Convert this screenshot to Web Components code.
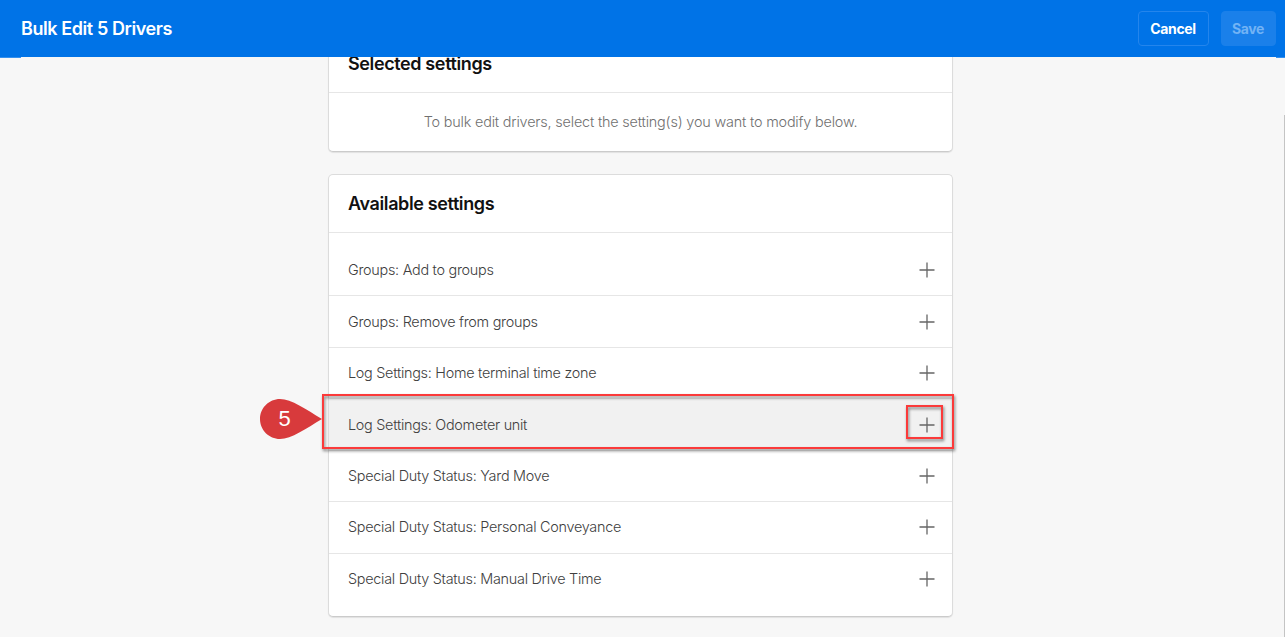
<!DOCTYPE html>
<html lang="en">
<head>
<meta charset="utf-8">
<title>Bulk Edit Drivers</title>
<style>
    html, body {
        margin: 0;
        height: 100%;
        overflow: hidden;
        background: #f7f7f7;
        font-family: Inter, "Liberation Sans", sans-serif;
    }
</style>
</head>
<body>
<bulk-edit-page></bulk-edit-page>

<script>
class ActionButton extends HTMLElement {
    constructor() {
        super();
        this.shadow = this.attachShadow({ mode: "open" });
    }

    connectedCallback() {
        this.shadow.innerHTML = `
            <style>
                :host {
                    display: block;
                }
                button {
                    box-sizing: border-box;
                    width: 100%;
                    height: 35px;
                    padding: 0;
                    border: 1px solid #2485ec;
                    border-radius: 4px;
                    background: transparent;
                    color: #fff;
                    font: 700 14px/20px Inter, "Liberation Sans", sans-serif;
                    letter-spacing: -0.35px;
                }
                :host([disabled]) button {
                    border-color: #1a80ea;
                    background: #1a80ea;
                    color: #72b3f5;
                }
            </style>
            <button><slot></slot></button>
        `;
    }
}

class PageHeader extends HTMLElement {
    constructor() {
        super();
        this.shadow = this.attachShadow({ mode: "open" });
    }

    connectedCallback() {
        this.shadow.innerHTML = `
            <style>
                :host {
                    display: block;
                    flex: none;
                    height: 58px;
                    background: linear-gradient(#0073e7, #0073e7) 0 0 / 100% 57px no-repeat;
                }
                .bar {
                    box-sizing: border-box;
                    display: flex;
                    align-items: center;
                    height: 57px;
                    padding: 0 9.5px 0 21px;
                    color: #fff;
                }
                h1 {
                    flex: 1;
                    margin: 0;
                    font-size: 18px;
                    font-weight: 600;
                    line-height: 24px;
                    letter-spacing: -0.42px;
                }
                .actions {
                    display: flex;
                    gap: 12px;
                }
                .cancel {
                    width: 71px;
                }
                .save {
                    width: 55px;
                }
                .edge {
                    display: flex;
                    justify-content: space-between;
                    height: 1px;
                }
                .edge span {
                    width: 21px;
                    background: #3590ee;
                }
                .edge span + span {
                    width: 9px;
                }
            </style>
            <div class="bar">
                <h1><slot></slot></h1>
                <div class="actions">
                    <action-button class="cancel">Cancel</action-button>
                    <action-button class="save" disabled>Save</action-button>
                </div>
            </div>
            <div class="edge"><span></span><span></span></div>
        `;
    }
}

class SettingsCard extends HTMLElement {
    constructor() {
        super();
        this.shadow = this.attachShadow({ mode: "open" });
    }

    get heading() {
        return this.getAttribute("heading");
    }

    connectedCallback() {
        this.shadow.innerHTML = `
            <style>
                :host {
                    display: block;
                    box-sizing: border-box;
                    width: 625px;
                    border: 1px solid #dcdcdc;
                    border-bottom-color: #cbcbcb;
                    border-radius: 5px;
                    background: #fff;
                    box-shadow: 0 1px 1px rgba(0, 0, 0, 0.09);
                }
                h2 {
                    box-sizing: border-box;
                    height: 58px;
                    margin: 0;
                    padding: 0 19px;
                    border-bottom: 1px solid #e6e6e6;
                    color: #111;
                    font-size: 18px;
                    font-weight: 600;
                    line-height: 57px;
                    letter-spacing: -0.38px;
                }
            </style>
            <h2>${this.heading}</h2>
            <slot></slot>
        `;
    }
}

class SettingRow extends HTMLElement {
    constructor() {
        super();
        this.shadow = this.attachShadow({ mode: "open" });
    }

    connectedCallback() {
        this.shadow.innerHTML = `
            <style>
                :host {
                    display: flex;
                    align-items: center;
                    justify-content: space-between;
                    box-sizing: border-box;
                    height: 51.45px;
                    padding: 0 17px 0 19px;
                    border-bottom: 1px solid #e6e6e6;
                    color: #404040;
                    font-size: 14.4px;
                    font-weight: 300;
                    line-height: 20px;
                    letter-spacing: -0.27px;
                }
                :host([active]) {
                    background: #f1f1f1;
                }
                :host(:last-child) {
                    border-bottom-color: transparent;
                }
                svg {
                    display: block;
                }
            </style>
            <span><slot></slot></span>
            <svg width="16" height="16" viewBox="0 0 16 16" fill="none" stroke="#666" stroke-width="1.3">
                <path d="M8 .5v15M.5 8h15"/>
            </svg>
        `;
    }
}

/* Numbered pin with a frame round the row and one round its button */
class StepCallout extends HTMLElement {
    constructor() {
        super();
        this.shadow = this.attachShadow({ mode: "open" });
    }

    connectedCallback() {
        this.shadow.innerHTML = `
            <style>
                :host {
                    position: absolute;
                    left: 260px;
                    top: 394px;
                    width: 694.4px;
                    height: 55px;
                    pointer-events: none;
                }
                .frame {
                    position: absolute;
                    box-sizing: border-box;
                    border: 2px solid #fb3a3a;
                    filter: drop-shadow(1px 2px 1.5px rgba(0, 0, 0, 0.5));
                }
                .row {
                    inset: 0 0 0 62px;
                }
                .button {
                    left: 646px;
                    top: 11px;
                    width: 37px;
                    height: 34px;
                }
                .pin {
                    position: absolute;
                    left: 0;
                    top: 5px;
                    width: 62px;
                    height: 40px;
                }
                svg {
                    display: block;
                }
                .number {
                    position: absolute;
                    left: 14px;
                    top: 8px;
                    width: 21px;
                    color: #fff;
                    font: 22px/24px "Liberation Sans", sans-serif;
                    text-align: center;
                }
            </style>
            <div class="frame row"></div>
            <div class="frame button"></div>
            <div class="pin">
                <svg width="62" height="40" viewBox="0 0 62 40">
                    <path fill="#d83a3c" d="M20 0C9 0 0 9 0 20s9 20 20 20c11.500 0 26-10.500 42-20C46 10.500 31.500 0 20 0z"/>
                </svg>
                <span class="number"><slot></slot></span>
            </div>
        `;
    }
}

class BulkEditPage extends HTMLElement {
    constructor() {
        super();
        this.shadow = this.attachShadow({ mode: "open" });
        this.settings = [
            "Groups: Add to groups",
            "Groups: Remove from groups",
            "Log Settings: Home terminal time zone",
            "Log Settings: Odometer unit",
            "Special Duty Status: Yard Move",
            "Special Duty Status: Personal Conveyance",
            "Special Duty Status: Manual Drive Time"
        ];
        this.activeSetting = 3;
    }

    connectedCallback() {
        const rows = this.settings.map((name, i) => {
            return `<setting-row${i === this.activeSetting ? " active" : ""}>${name}</setting-row>`;
        }).join("");

        this.shadow.innerHTML = `
            <style>
                :host {
                    display: flex;
                    flex-direction: column;
                    position: relative;
                    height: 637px;
                    overflow: hidden;
                }
                page-header {
                    z-index: 1;
                }
                main {
                    display: flex;
                    flex: 1;
                    min-height: 0;
                    margin-top: -1px;
                }
                .content {
                    display: flex;
                    flex: 1;
                    flex-direction: column;
                    align-items: center;
                    gap: 22px;
                    overflow: hidden;
                    padding-right: 3px;
                }
                /* the first card is scrolled partly under the header */
                .selected {
                    margin-top: -23px;
                    flex: none;
                }
                .available {
                    flex: none;
                }
                .hint {
                    margin: 0;
                    height: 58px;
                    color: #707070;
                    font-size: 14.4px;
                    font-weight: 300;
                    line-height: 58px;
                    letter-spacing: -0.18px;
                    text-align: center;
                }
                .rows {
                    padding: 12px 0 11px;
                }
                .scrollbar {
                    width: 1px;
                    margin-top: 58px;
                    background: #c4c4c4;
                }
            </style>
            <page-header>Bulk Edit 5 Drivers</page-header>
            <main>
                <div class="content">
                    <settings-card class="selected" heading="Selected settings">
                        <p class="hint">To bulk edit drivers, select the setting(s) you want to modify below.</p>
                    </settings-card>
                    <settings-card class="available" heading="Available settings">
                        <div class="rows">${rows}</div>
                    </settings-card>
                </div>
                <div class="scrollbar"></div>
            </main>
            <step-callout>5</step-callout>
        `;
    }
}

customElements.define('action-button', ActionButton);
customElements.define('page-header', PageHeader);
customElements.define('settings-card', SettingsCard);
customElements.define('setting-row', SettingRow);
customElements.define('step-callout', StepCallout);
customElements.define('bulk-edit-page', BulkEditPage);
</script>
</body>
</html>
